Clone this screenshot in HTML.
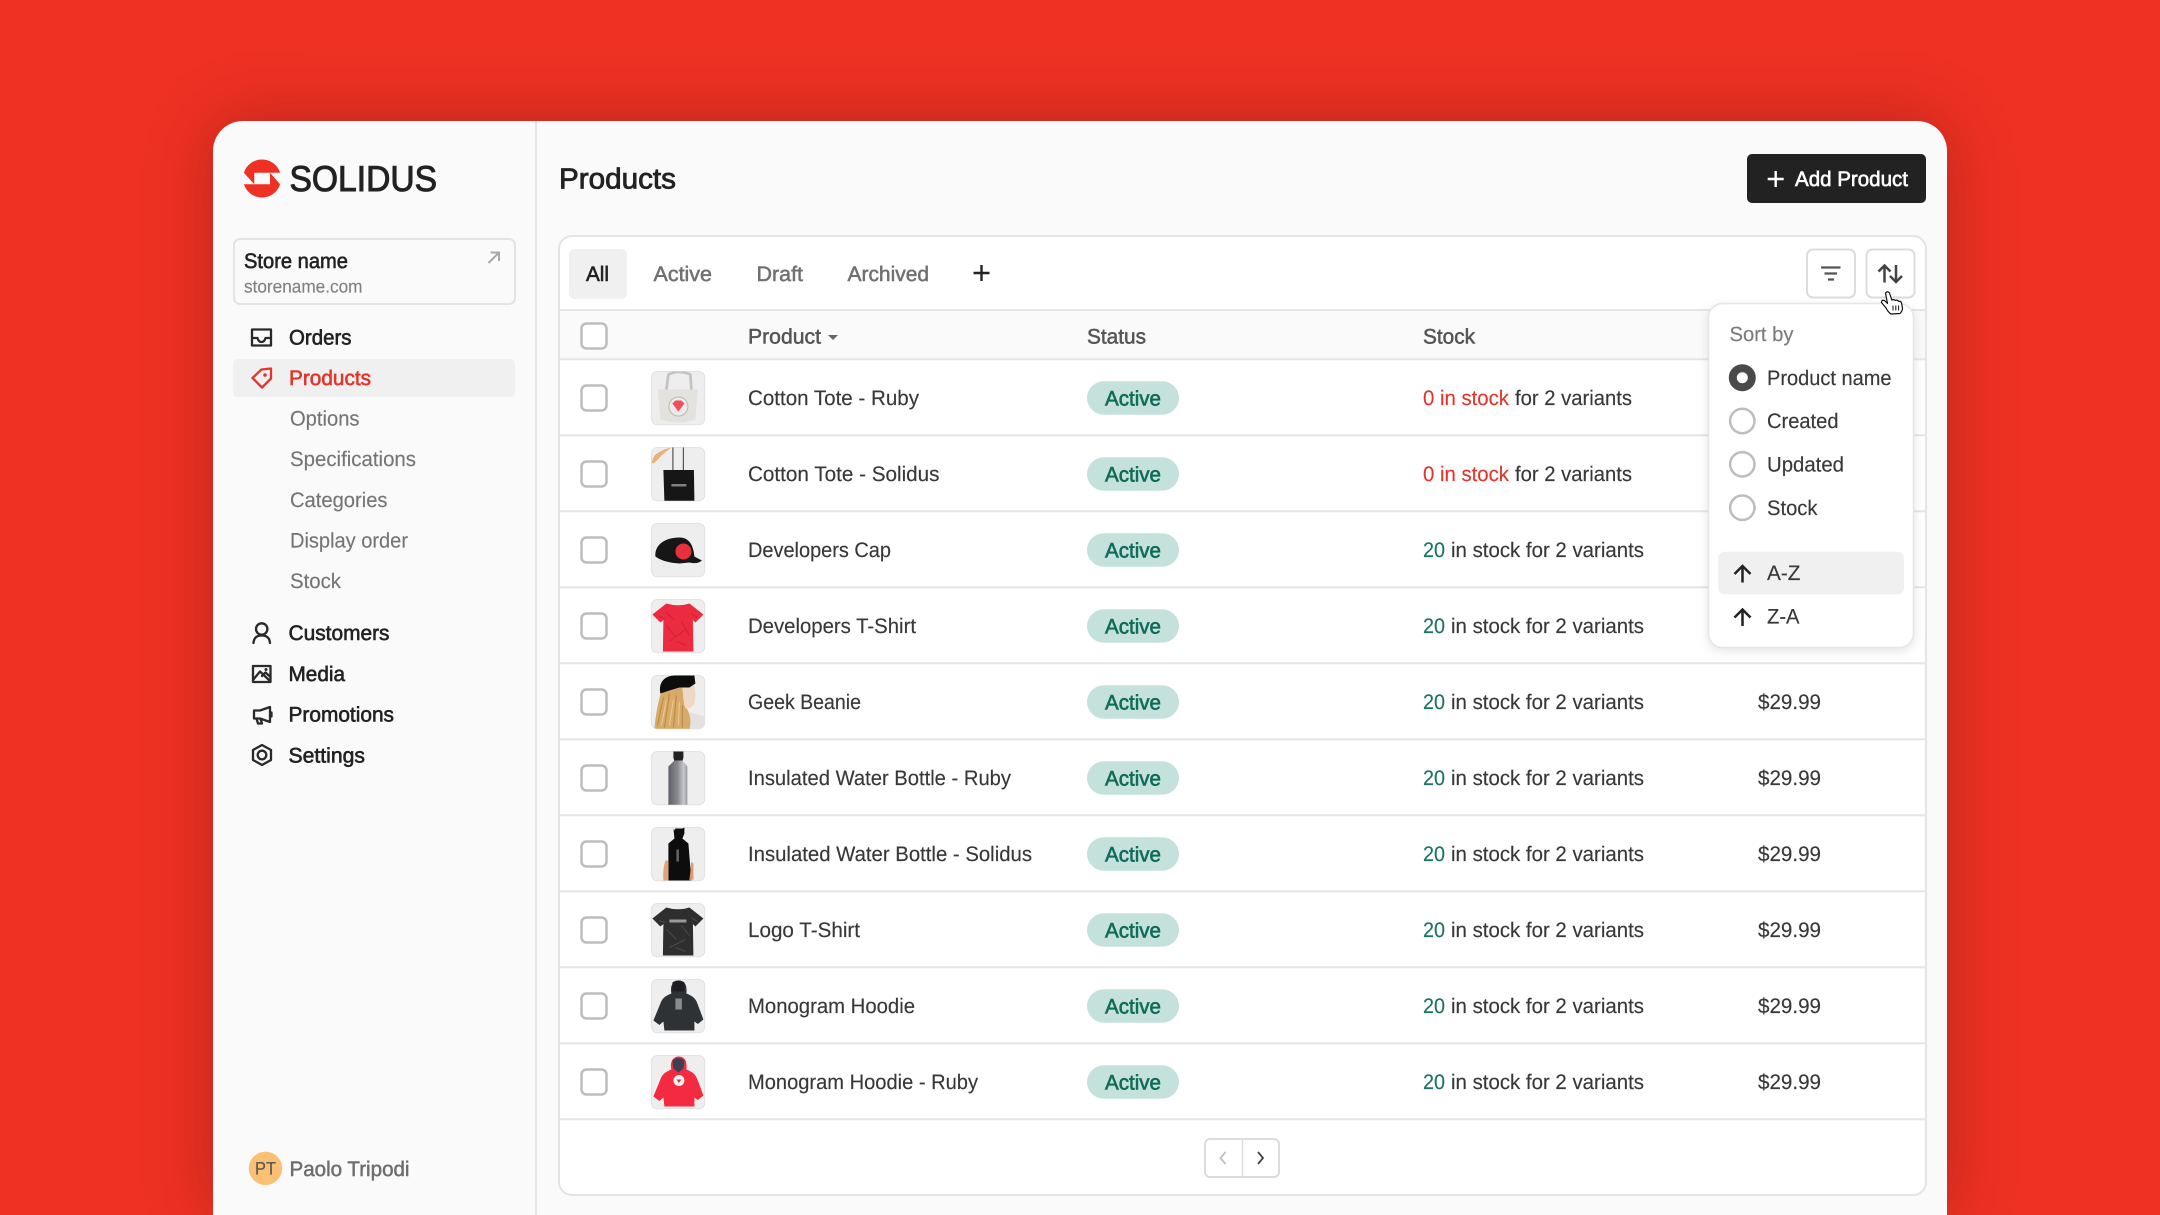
<!DOCTYPE html>
<html lang="en">
<head>
<meta charset="utf-8">
<title>Solidus Products</title>
<style>
html,body{margin:0;padding:0;width:2160px;height:1215px;overflow:hidden;background:#ee3123}
svg{display:block}
text{font-family:"Liberation Sans",sans-serif;font-size:21px;fill:#383838;stroke:#383838;stroke-width:.15;text-rendering:geometricPrecision}
.sb{fill:#222;stroke:#222;stroke-width:.6}
.sub{fill:#757575;stroke:#757575}
.hd{fill:#555;stroke:#555;stroke-width:.5}
.tab{fill:#707070;stroke:#707070;stroke-width:.5}
.ac{fill:#0f6b57;stroke:#0f6b57;stroke-width:.6}
.r{fill:#e3352b;stroke:#e3352b}
.t{fill:#1c7462;stroke:#1c7462}
.ic{fill:none;stroke:#2a2a2a;stroke-width:2.3;stroke-linejoin:round;stroke-linecap:round}
</style>
</head>
<body>
<svg width="2160" height="1215" viewBox="0 0 2160 1215" xmlns="http://www.w3.org/2000/svg">
<defs>
<g id="cb"><rect x="-12.5" y="-12.5" width="25" height="25" rx="5" fill="#fff" stroke="#bdbdbd" stroke-width="2.5"/></g>
<g id="bd"><rect x="1087" y="-16.7" width="92" height="33.4" rx="16.7" fill="#c4e1db"/></g>
<clipPath id="th"><rect width="53.3" height="53.3" rx="6"/></clipPath>
<path id="tee" d="M15 4L1 15L9 23L12 20.5L11.5 52L42 52L41.5 20.5L44 23L52 15L38 4Q27 7.5 15 4Z"/>
<path id="hood" d="M20 14C18 5 23 1 27 1C33 1 36 5 35 14C40 16 44 18 46 24L52 40L46.5 44.5L43 42L43 51L13 51L12 42L8 45.5L2 41L9 24C11 18 15 16 20 14Z"/>
<filter id="soft" x="-10%" y="-10%" width="120%" height="120%"><feGaussianBlur stdDeviation="0.35"/></filter>
<linearGradient id="bot" x1="0" x2="1" y1="0" y2="0"><stop offset="0" stop-color="#5f6168"/><stop offset=".5" stop-color="#8a8c92"/><stop offset=".8" stop-color="#c8c9cd"/><stop offset="1" stop-color="#9a9ba0"/></linearGradient>
</defs>

<!-- card -->
<path d="M213 1215V151A30 30 0 0 1 243 121H1917A30 30 0 0 1 1947 151V1215Z" fill="#fafafa" style="filter:drop-shadow(0 0 34px rgba(0,0,0,.22))"/>
<rect x="535" y="121" width="2" height="1094" fill="#e6e6e6"/>

<!-- logo -->
<path fill="#ee3123" d="M243.9 172.7A19 19 0 0 1 280.1 172.7L254.3 172.7L254.3 184.3Z"/>
<path fill="#ee3123" d="M280.1 184.3A19 19 0 0 1 243.9 184.3L270 184.3L270 172.7Z"/>
<text x="289.5" y="191" textLength="147.5" lengthAdjust="spacingAndGlyphs" style="font-size:36px;fill:#222;stroke:#222;stroke-width:1">SOLIDUS</text>

<!-- store -->
<rect x="234" y="239" width="281" height="65" rx="6" fill="#fafafa" stroke="#e3e3e3" stroke-width="2"/>
<text class="sb" x="244" y="268" textLength="104" lengthAdjust="spacingAndGlyphs">Store name</text>
<text x="244" y="292.5" textLength="118.5" lengthAdjust="spacingAndGlyphs" style="font-size:18px;fill:#808080;stroke:#808080">storename.com</text>
<path d="M488.5 263L498.5 253M490.5 252.5H499V261" fill="none" stroke="#a8a8a8" stroke-width="2"/>

<!-- nav -->
<rect x="233" y="359" width="282" height="38" rx="5" fill="#f0f0f0"/>
<g class="ic">
<path d="M252 329.5H271V345.5H252ZM252 338H257.5Q258.5 342 261.5 342Q264.5 342 265.5 338H271"/>
</g>
<text class="sb" x="289" y="344.5" textLength="62.5" lengthAdjust="spacingAndGlyphs">Orders</text>
<path d="M252.5 378L261.5 369.5L271 368.5L271 378.5L262 387.5Z" fill="none" stroke="#e3352b" stroke-width="2.3" stroke-linejoin="round"/>
<circle cx="265" cy="375" r="1.8" fill="#e3352b"/>
<text x="289" y="385" textLength="82" lengthAdjust="spacingAndGlyphs" style="fill:#e3352b;stroke:#e3352b;stroke-width:.6">Products</text>

<text class="sub" x="290" y="425.5" textLength="69.5" lengthAdjust="spacingAndGlyphs">Options</text>
<text class="sub" x="290" y="466" textLength="126" lengthAdjust="spacingAndGlyphs">Specifications</text>
<text class="sub" x="290" y="507" textLength="97.5" lengthAdjust="spacingAndGlyphs">Categories</text>
<text class="sub" x="290" y="547.5" textLength="118" lengthAdjust="spacingAndGlyphs">Display order</text>
<text class="sub" x="290" y="588" textLength="51" lengthAdjust="spacingAndGlyphs">Stock</text>

<g class="ic">
<circle cx="261.7" cy="629" r="5.7"/>
<path d="M253.5 643Q254 635.5 261.7 635.5Q269.5 635.5 270 643"/>
<path d="M253 666H270.5V682H253ZM253 680L260 671.5L270 681M262 676L265.5 672.5L270.5 677"/>
<path d="M254 710.5H260L270 707V722L260 718.5H254ZM256.5 718.5L258 723.5H262L260.5 719M271.5 712.5V716.5"/>
<path d="M262 745L271 750V760L262 765L253 760V750Z"/>
<circle cx="262" cy="755" r="4.3"/>
</g>
<circle cx="266" cy="669.5" r="1.5" fill="#2a2a2a"/>
<text class="sb" x="288.5" y="640" textLength="101" lengthAdjust="spacingAndGlyphs">Customers</text>
<text class="sb" x="288.5" y="681" textLength="56.5" lengthAdjust="spacingAndGlyphs">Media</text>
<text class="sb" x="288.5" y="721.5" textLength="105.5" lengthAdjust="spacingAndGlyphs">Promotions</text>
<text class="sb" x="288.5" y="762.5" textLength="76.5" lengthAdjust="spacingAndGlyphs">Settings</text>

<circle cx="265.5" cy="1168.3" r="16.7" fill="#fcc074"/>
<text x="255" y="1174.5" textLength="21" lengthAdjust="spacingAndGlyphs" style="font-size:18px;fill:#555;stroke:#555">PT</text>
<text x="289.5" y="1176" textLength="120" lengthAdjust="spacingAndGlyphs" style="fill:#6e6e6e;stroke:#6e6e6e;stroke-width:.5">Paolo Tripodi</text>

<!-- header -->
<text x="559" y="188.5" textLength="117" lengthAdjust="spacingAndGlyphs" style="font-size:29px;fill:#222;stroke:#222;stroke-width:.8">Products</text>
<rect x="1747" y="154" width="179" height="49" rx="5" fill="#222"/>
<path d="M1775.7 171V187M1767.7 179H1783.7" stroke="#fff" stroke-width="2.4"/>
<text x="1795" y="186" textLength="113" lengthAdjust="spacingAndGlyphs" style="fill:#fff;stroke:#fff;stroke-width:.6">Add Product</text>

<!-- panel -->
<rect x="559" y="236" width="1367" height="959" rx="13" fill="#fff" stroke="#e4e4e4" stroke-width="2"/>
<rect x="569" y="249" width="58" height="50" rx="6" fill="#f0f0f0"/>
<text class="sb" x="586" y="281" textLength="23" lengthAdjust="spacingAndGlyphs">All</text>
<text class="tab" x="653.5" y="281" textLength="58.5" lengthAdjust="spacingAndGlyphs">Active</text>
<text class="tab" x="756.5" y="281" textLength="46.5" lengthAdjust="spacingAndGlyphs">Draft</text>
<text class="tab" x="847.5" y="281" textLength="81.5" lengthAdjust="spacingAndGlyphs">Archived</text>
<path d="M981.5 265V281M973.5 273H989.5" stroke="#222" stroke-width="2.4"/>

<rect x="1807" y="249.5" width="48" height="48" rx="6" fill="#fff" stroke="#dcdcdc" stroke-width="2"/>
<path d="M1821 267.5H1840.5M1824.5 273.5H1837M1828 279.5H1834" stroke="#555" stroke-width="2.2"/>
<rect x="1866.5" y="249.5" width="48" height="48" rx="6" fill="#fff" stroke="#dcdcdc" stroke-width="2"/>
<path d="M1884.5 282.5V265.5M1878.5 271.5L1884.5 265.5L1890.5 271.5M1896 265V282M1890 276L1896 282L1902 276" fill="none" stroke="#444" stroke-width="2.5"/>

<!-- table head -->
<path d="M560 311H1925V360H560Z" fill="#fafafa"/>
<path d="M560 310H1925M560 359.3H1925M560 435.3H1925M560 511.3H1925M560 587.3H1925M560 663.3H1925M560 739.3H1925M560 815.3H1925M560 891.3H1925M560 967.3H1925M560 1043.3H1925M560 1119.3H1925" stroke="#e6e6e6" stroke-width="2" fill="none"/>
<use href="#cb" x="594" y="336"/>
<text class="hd" x="748" y="343.5" textLength="73" lengthAdjust="spacingAndGlyphs">Product</text>
<path d="M828 335H838L833 340Z" fill="#666"/>
<text class="hd" x="1087" y="343.5" textLength="59" lengthAdjust="spacingAndGlyphs">Status</text>
<text class="hd" x="1423" y="343.5" textLength="52" lengthAdjust="spacingAndGlyphs">Stock</text>

<!-- row 1 -->
<use href="#cb" x="594" y="398"/>
<text x="748" y="405" textLength="171" lengthAdjust="spacingAndGlyphs">Cotton Tote - Ruby</text>
<use href="#bd" y="398"/>
<text class="ac" x="1105" y="405.5" textLength="56" lengthAdjust="spacingAndGlyphs">Active</text>
<text class="r" x="1423" y="405" textLength="86" lengthAdjust="spacingAndGlyphs">0 in stock</text>
<text x="1515" y="405" textLength="117" lengthAdjust="spacingAndGlyphs">for 2 variants</text>

<!-- row 2 -->
<use href="#cb" x="594" y="474"/>
<text x="748" y="481" textLength="191.5" lengthAdjust="spacingAndGlyphs">Cotton Tote - Solidus</text>
<use href="#bd" y="474"/>
<text class="ac" x="1105" y="481.5" textLength="56" lengthAdjust="spacingAndGlyphs">Active</text>
<text class="r" x="1423" y="481" textLength="86" lengthAdjust="spacingAndGlyphs">0 in stock</text>
<text x="1515" y="481" textLength="117" lengthAdjust="spacingAndGlyphs">for 2 variants</text>

<!-- row 3 -->
<use href="#cb" x="594" y="550"/>
<text x="748" y="557" textLength="143" lengthAdjust="spacingAndGlyphs">Developers Cap</text>
<use href="#bd" y="550"/>
<text class="ac" x="1105" y="557.5" textLength="56" lengthAdjust="spacingAndGlyphs">Active</text>
<text class="t" x="1423" y="557" textLength="22" lengthAdjust="spacingAndGlyphs">20</text>
<text x="1451" y="557" textLength="193" lengthAdjust="spacingAndGlyphs">in stock for 2 variants</text>

<!-- row 4 -->
<use href="#cb" x="594" y="626"/>
<text x="748" y="633" textLength="168" lengthAdjust="spacingAndGlyphs">Developers T-Shirt</text>
<use href="#bd" y="626"/>
<text class="ac" x="1105" y="633.5" textLength="56" lengthAdjust="spacingAndGlyphs">Active</text>
<text class="t" x="1423" y="633" textLength="22" lengthAdjust="spacingAndGlyphs">20</text>
<text x="1451" y="633" textLength="193" lengthAdjust="spacingAndGlyphs">in stock for 2 variants</text>

<!-- row 5 -->
<use href="#cb" x="594" y="702"/>
<text x="748" y="709" textLength="113" lengthAdjust="spacingAndGlyphs">Geek Beanie</text>
<use href="#bd" y="702"/>
<text class="ac" x="1105" y="709.5" textLength="56" lengthAdjust="spacingAndGlyphs">Active</text>
<text class="t" x="1423" y="709" textLength="22" lengthAdjust="spacingAndGlyphs">20</text>
<text x="1451" y="709" textLength="193" lengthAdjust="spacingAndGlyphs">in stock for 2 variants</text>
<text x="1758" y="709" textLength="63" lengthAdjust="spacingAndGlyphs">$29.99</text>

<!-- row 6 -->
<use href="#cb" x="594" y="778"/>
<text x="748" y="785" textLength="263" lengthAdjust="spacingAndGlyphs">Insulated Water Bottle - Ruby</text>
<use href="#bd" y="778"/>
<text class="ac" x="1105" y="785.5" textLength="56" lengthAdjust="spacingAndGlyphs">Active</text>
<text class="t" x="1423" y="785" textLength="22" lengthAdjust="spacingAndGlyphs">20</text>
<text x="1451" y="785" textLength="193" lengthAdjust="spacingAndGlyphs">in stock for 2 variants</text>
<text x="1758" y="785" textLength="63" lengthAdjust="spacingAndGlyphs">$29.99</text>

<!-- row 7 -->
<use href="#cb" x="594" y="854"/>
<text x="748" y="861" textLength="284" lengthAdjust="spacingAndGlyphs">Insulated Water Bottle - Solidus</text>
<use href="#bd" y="854"/>
<text class="ac" x="1105" y="861.5" textLength="56" lengthAdjust="spacingAndGlyphs">Active</text>
<text class="t" x="1423" y="861" textLength="22" lengthAdjust="spacingAndGlyphs">20</text>
<text x="1451" y="861" textLength="193" lengthAdjust="spacingAndGlyphs">in stock for 2 variants</text>
<text x="1758" y="861" textLength="63" lengthAdjust="spacingAndGlyphs">$29.99</text>

<!-- row 8 -->
<use href="#cb" x="594" y="930"/>
<text x="748" y="937" textLength="112" lengthAdjust="spacingAndGlyphs">Logo T-Shirt</text>
<use href="#bd" y="930"/>
<text class="ac" x="1105" y="937.5" textLength="56" lengthAdjust="spacingAndGlyphs">Active</text>
<text class="t" x="1423" y="937" textLength="22" lengthAdjust="spacingAndGlyphs">20</text>
<text x="1451" y="937" textLength="193" lengthAdjust="spacingAndGlyphs">in stock for 2 variants</text>
<text x="1758" y="937" textLength="63" lengthAdjust="spacingAndGlyphs">$29.99</text>

<!-- row 9 -->
<use href="#cb" x="594" y="1006"/>
<text x="748" y="1013" textLength="167" lengthAdjust="spacingAndGlyphs">Monogram Hoodie</text>
<use href="#bd" y="1006"/>
<text class="ac" x="1105" y="1013.5" textLength="56" lengthAdjust="spacingAndGlyphs">Active</text>
<text class="t" x="1423" y="1013" textLength="22" lengthAdjust="spacingAndGlyphs">20</text>
<text x="1451" y="1013" textLength="193" lengthAdjust="spacingAndGlyphs">in stock for 2 variants</text>
<text x="1758" y="1013" textLength="63" lengthAdjust="spacingAndGlyphs">$29.99</text>

<!-- row 10 -->
<use href="#cb" x="594" y="1082"/>
<text x="748" y="1089" textLength="230" lengthAdjust="spacingAndGlyphs">Monogram Hoodie - Ruby</text>
<use href="#bd" y="1082"/>
<text class="ac" x="1105" y="1089.5" textLength="56" lengthAdjust="spacingAndGlyphs">Active</text>
<text class="t" x="1423" y="1089" textLength="22" lengthAdjust="spacingAndGlyphs">20</text>
<text x="1451" y="1089" textLength="193" lengthAdjust="spacingAndGlyphs">in stock for 2 variants</text>
<text x="1758" y="1089" textLength="63" lengthAdjust="spacingAndGlyphs">$29.99</text>

<!-- thumbnails -->
<g transform="translate(651.4 371.5)"><rect width="53.3" height="53.3" rx="6" fill="#eee" stroke="#e2e2e2"/><g clip-path="url(#th)" filter="url(#soft)">
<path d="M15 18L17 3Q27 -2 39 3L40 18" fill="none" stroke="#c2c2c2" stroke-width="2.6"/>
<path d="M6.5 18H46.5L44 48Q26 54 9 48Z" fill="#e3e2de"/>
<circle cx="27" cy="35" r="9.5" fill="#ecebe8" stroke="#b9b9b6" stroke-width="1"/>
<path d="M21 32L24 29H30L33 32L27 40Z" fill="#ef4f5c"/></g></g>

<g transform="translate(651.4 447.5)"><rect width="53.3" height="53.3" rx="6" fill="#eee" stroke="#e2e2e2"/><g clip-path="url(#th)" filter="url(#soft)">
<path d="M0 15L3 8Q10 2 20 0L10 8Q6 13 2 16Z" fill="#e8b279"/>
<path d="M21.5 0V24M32 0V24" stroke="#555" stroke-width="1.2"/>
<path d="M12 22.5H42.5L43 54H13Z" fill="#141414"/>
<rect x="20" y="36.5" width="15" height="2.5" fill="#808080"/></g></g>

<g transform="translate(651.4 523.5)"><rect width="53.3" height="53.3" rx="6" fill="#eee" stroke="#e2e2e2"/><g clip-path="url(#th)" filter="url(#soft)">
<path d="M4 33C3 21 14 14 28 14C38 14 42 22 43 33L50.5 37Q46 41 38 39L28 40Q12 39 4 33Z" fill="#141416"/>
<circle cx="32" cy="28" r="8" fill="#e5323c"/></g></g>

<g transform="translate(651.4 599.5)"><rect width="53.3" height="53.3" rx="6" fill="#eee" stroke="#e2e2e2"/><g clip-path="url(#th)" filter="url(#soft)">
<use href="#tee" fill="#ec2a40"/>
<path d="M15 26L25 38M30 22L38 36M18 42L34 30M14 12L22 20M35 46L25 42M8 17L14 19M40 14L46 18" stroke="#cf2238" stroke-width="1" fill="none"/></g></g>

<g transform="translate(651.4 675.5)"><rect width="53.3" height="53.3" rx="6" fill="#eee" stroke="#e2e2e2"/><g clip-path="url(#th)" filter="url(#soft)">
<path d="M36 36L53 41V54H34Z" fill="#e4e2e0"/>
<path d="M11 12C7 25 4 40 3 54H38C40 47 39 40 36 34L33 30L31 12Z" fill="#d8aa68"/>
<path d="M31 8H43L44 20L43 29L38 33L34 33L32 24Z" fill="#efd9c6"/>
<path d="M9 18C7 8 12 0 24 0L43 0L44 8L38 12L28 12L18 15Z" fill="#111"/>
<path d="M12 22L6 50M18 18L13 52M25 20L22 52M31 30L31 52" stroke="#b98a48" stroke-width="1.1" fill="none"/>
<path d="M15 24L10 50M22 24L18 50M28 26L27 50" stroke="#ecca8e" stroke-width="1" fill="none"/></g></g>

<g transform="translate(651.4 751.5)"><rect width="53.3" height="53.3" rx="6" fill="#eee" stroke="#e2e2e2"/><g clip-path="url(#th)" filter="url(#soft)">
<path d="M22 0H32V6L31 10H23L22 6Z" fill="#222"/>
<path d="M23 9H31L36 15V54H17V15Z" fill="url(#bot)"/></g></g>

<g transform="translate(651.4 827.5)"><rect width="53.3" height="53.3" rx="6" fill="#eee" stroke="#e2e2e2"/><g clip-path="url(#th)" filter="url(#soft)">
<path d="M22 0V4L24 1L31 1L33 0V6L31 11L37 16L40 53H17V16L23 11Z" fill="#0e0e0e"/>
<path d="M14 33L17 33V53H12Q11 42 14 33Z" fill="#dda578"/>
<path d="M40 34L42 36V52L38 53Z" fill="#d99a6f"/>
<rect x="25" y="22" width="2.5" height="12" fill="#666"/></g></g>

<g transform="translate(651.4 903.5)"><rect width="53.3" height="53.3" rx="6" fill="#eee" stroke="#e2e2e2"/><g clip-path="url(#th)" filter="url(#soft)">
<use href="#tee" fill="#2d2d2f"/>
<path d="M15 26L25 36M30 22L38 32M18 44L34 36M34 48L24 44M8 17L14 19M40 14L46 18" stroke="#4b4b4e" stroke-width="1" fill="none"/>
<rect x="18" y="16" width="17" height="3" fill="#999"/></g></g>

<g transform="translate(651.4 979.5)"><rect width="53.3" height="53.3" rx="6" fill="#eee" stroke="#e2e2e2"/><g clip-path="url(#th)" filter="url(#soft)">
<use href="#hood" fill="#2e3036"/>
<path d="M21 3Q27 -1 33 3L33 12H21Z" fill="#1d1e22"/>
<rect x="24" y="19" width="6.5" height="11" fill="#8a8a8a"/></g></g>

<g transform="translate(651.4 1055.5)"><rect width="53.3" height="53.3" rx="6" fill="#eee" stroke="#e2e2e2"/><g clip-path="url(#th)" filter="url(#soft)">
<use href="#hood" fill="#f4293f"/>
<path d="M21 5Q27 0 33 5L32 13L27 17L22 13Z" fill="#3c4150"/>
<circle cx="27.5" cy="25" r="5.5" fill="#f3f3f3"/><path d="M25 24H30L27.5 27.5Z" fill="#e33"/></g></g>

<!-- pagination -->
<rect x="1205" y="1139" width="74" height="38" rx="5" fill="#fff" stroke="#dcdcdc" stroke-width="2"/>
<path d="M1242.5 1139V1177" stroke="#dcdcdc" stroke-width="1.5"/>
<path d="M1225.5 1152L1220.5 1158L1225.5 1164" fill="none" stroke="#c0c0c0" stroke-width="1.8"/>
<path d="M1258 1152L1263 1158L1258 1164" fill="none" stroke="#444" stroke-width="1.8"/>

<!-- dropdown -->
<rect x="1708.5" y="303.5" width="205" height="344" rx="14" fill="#fff" stroke="#e6e6e6" stroke-width="1.6" style="filter:drop-shadow(0 3px 5px rgba(0,0,0,.1))"/>
<text x="1729.5" y="341" textLength="64" lengthAdjust="spacingAndGlyphs" style="font-size:20.5px;fill:#7a7a7a;stroke:#7a7a7a">Sort by</text>
<circle cx="1742.3" cy="377.7" r="9.5" fill="#fff" stroke="#4a4a4a" stroke-width="8"/>
<circle cx="1742.3" cy="421" r="12.2" fill="#fff" stroke="#bdbdbd" stroke-width="2.5"/>
<circle cx="1742.3" cy="464.3" r="12.2" fill="#fff" stroke="#bdbdbd" stroke-width="2.5"/>
<circle cx="1742.3" cy="507.7" r="12.2" fill="#fff" stroke="#bdbdbd" stroke-width="2.5"/>
<text x="1767" y="385" textLength="124.5" lengthAdjust="spacingAndGlyphs">Product name</text>
<text x="1767" y="428" textLength="71.5" lengthAdjust="spacingAndGlyphs">Created</text>
<text x="1767" y="471.5" textLength="77" lengthAdjust="spacingAndGlyphs">Updated</text>
<text x="1767" y="515" textLength="50.5" lengthAdjust="spacingAndGlyphs">Stock</text>
<rect x="1718.3" y="551.7" width="185.7" height="42.6" rx="6" fill="#f0f0f0"/>
<path d="M1742.5 582.5V566M1734.5 574L1742.5 566L1750.5 574M1742.5 626V609.5M1734.5 617.5L1742.5 609.5L1750.5 617.5" fill="none" stroke="#222" stroke-width="2.5"/>
<text x="1767" y="580" textLength="33.5" lengthAdjust="spacingAndGlyphs">A-Z</text>
<text x="1767" y="623.5" textLength="32.5" lengthAdjust="spacingAndGlyphs">Z-A</text>

<!-- cursor -->
<path d="M1885.5 293Q1887.5 290.5 1889.5 293L1891.8 300Q1894 299 1895.2 300.5Q1897.5 299.5 1898.5 301.3Q1901 301 1901.5 303L1902.5 308Q1902.5 311 1900 313.5L1891 314Q1888 312 1886 308L1881.5 302.5Q1881.5 299.5 1884.5 300.5L1887.5 303.5Z" fill="#fff" stroke="#111" stroke-width="1.2" stroke-linejoin="round"/>
<path d="M1893 305.5V310.5M1895.8 305.5V310.5M1898.6 305.5V310.5" stroke="#111" stroke-width="1"/>
</svg>
</body>
</html>
